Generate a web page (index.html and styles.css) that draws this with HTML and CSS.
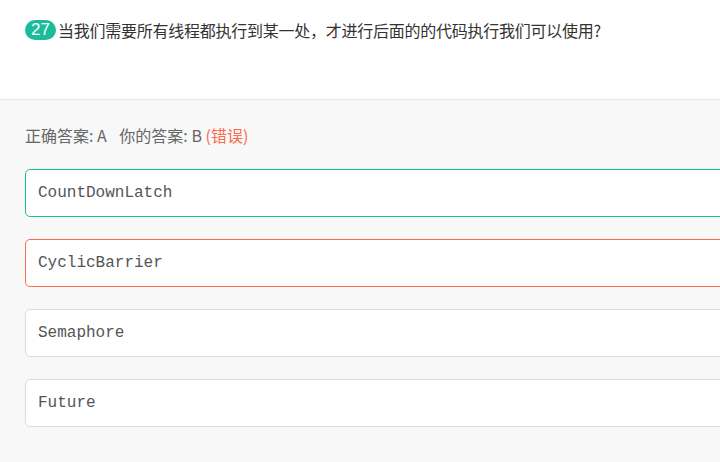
FILE: index.html
```html
<!DOCTYPE html>
<html lang="zh-CN">
<head>
  <meta charset="UTF-8">
  <title>题目 27</title>
  <link rel="stylesheet" href="styles.css">
</head>
<body>
  <div class="question">
    <span class="num">27</span><span class="title">当我们需要所有线程都执行到某一处，才进行后面的的代码执行我们可以使用?</span>
  </div>

  <div class="answer-area">
    <p class="result">
      正确答案: A <span class="mine">你的答案: B</span> <span class="wrong">(错误)</span>
    </p>

    <div class="option right">CountDownLatch</div>
    <div class="option error">CyclicBarrier</div>
    <div class="option">Semaphore</div>
    <div class="option">Future</div>
  </div>
</body>
</html>
```

FILE: styles.css
```css
body {
  margin: 0;
  font-family: "Noto Sans CJK SC", "Liberation Sans", sans-serif;
  color: #333;
  background: #f8f8f8;
}
.question {
  background: #fff;
  height: 100px;
  box-sizing: border-box;
  padding: 20px 25px 0;
  border-bottom: 1px solid #e8e8e8;
  display: flex;
  align-items: flex-start;
  font-size: 16px;
  line-height: 20px;
}
.num {
  display: inline-block;
  background: #1bbc9b;
  color: white;
  height: 20px;
  line-height: 20px;
  padding: 0 6px;
  border-radius: 10px;
  margin-right: 2px;
  font-family: "Liberation Sans", sans-serif;
  font-size: 17px;
}
.title {
  letter-spacing: -0.25px;
}
.answer-area {
  padding: 25px 0 0 25px;
  overflow: hidden;
}
.result {
  margin: 0 0 24px;
  font-size: 16px;
  line-height: 20px;
  color: #666;
}
.mine {
  margin-left: 9px;
}
.wrong {
  color: #fa6c4e;
}
.option {
  width: 720px;
  height: 46px;
  line-height: 46px;
  margin-bottom: 22px;
  padding-left: 12px;
  background: #fff;
  border: 1px solid #dcdcdc;
  border-radius: 5px;
  font-family: "Liberation Mono", monospace;
  font-size: 16px;
  color: #555;
}
.option.right {
  border-color: #1bbc9b;
}
.option.error {
  border-color: #fa6c4e;
}
```
